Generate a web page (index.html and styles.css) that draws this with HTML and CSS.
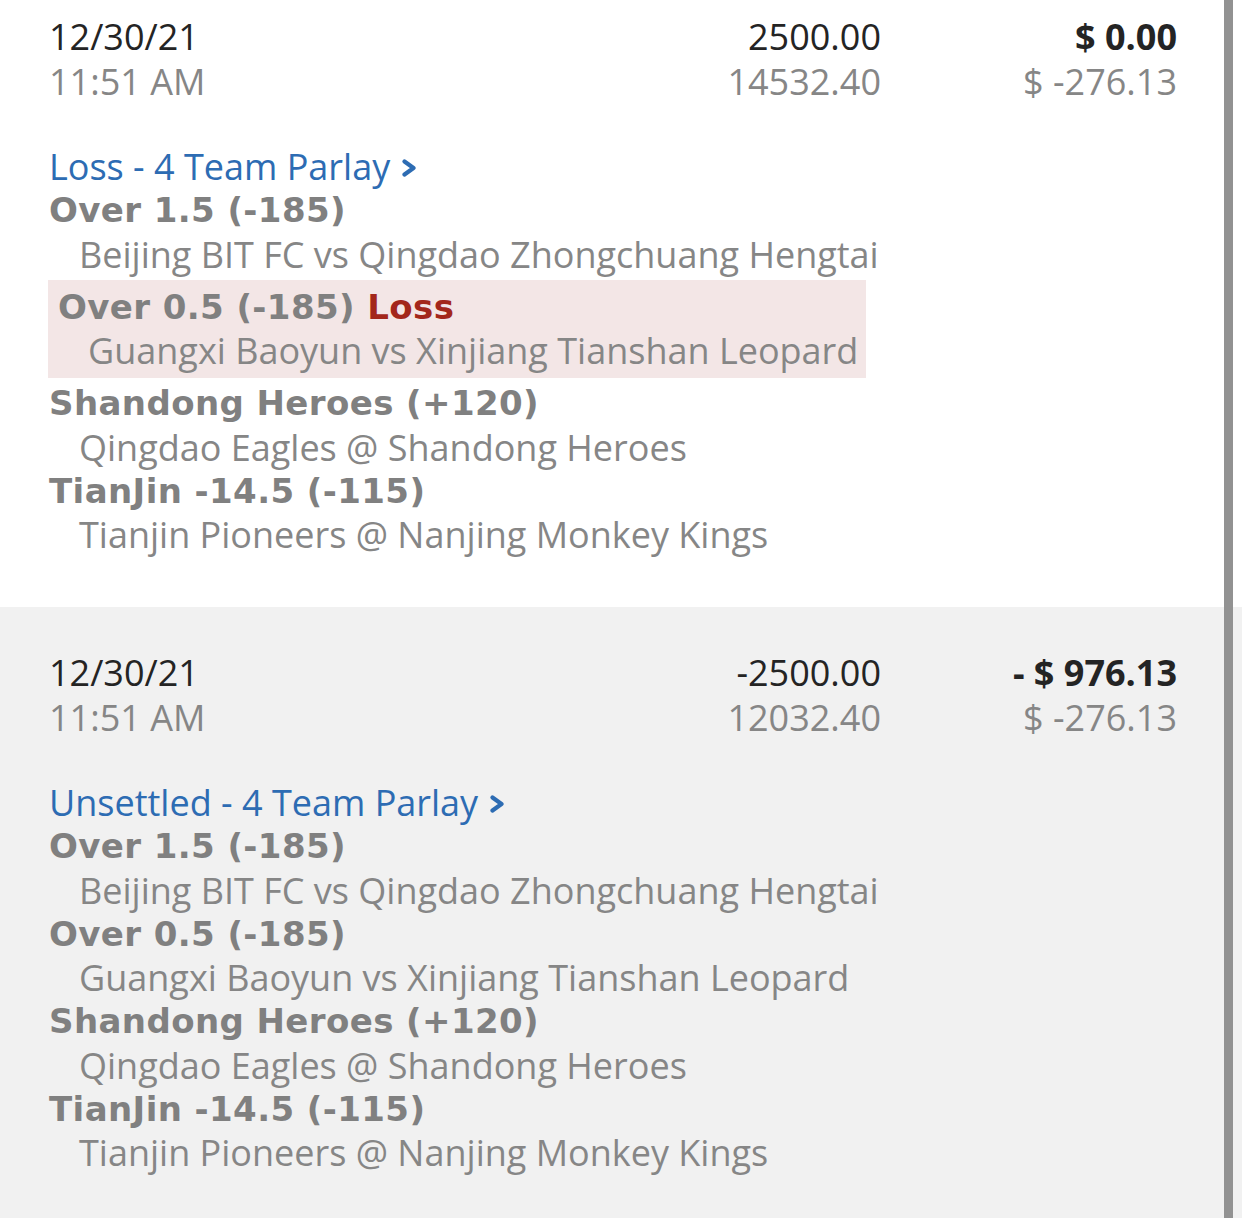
FILE: index.html
```html
<!DOCTYPE html>
<html lang="en">
<head>
<meta charset="utf-8">
<title>Wagers</title>
<link rel="stylesheet" href="styles.css">
</head>
<body>
<div class="page">
  <section class="wager wager-settled">
    <div class="head">
      <div class="col-date">
        <div class="dark">12/30/21</div>
        <div class="muted">11:51 AM</div>
      </div>
      <div class="col-risk">
        <div class="dark">2500.00</div>
        <div class="muted">14532.40</div>
      </div>
      <div class="col-win">
        <div class="dark strong">$ 0.00</div>
        <div class="muted">$ -276.13</div>
      </div>
    </div>
    <div class="legs">
      <a class="parlay-link">Loss - 4 Team Parlay<svg class="chev" width="16" height="18" viewBox="0 0 16 18"><polyline points="3.5,2.5 12.5,9 3.5,15.5" fill="none" stroke="currentColor" stroke-width="4.2" stroke-linecap="round" stroke-linejoin="round"/></svg></a>
      <div class="leg">
        <div class="pick">Over 1.5 (-185)</div>
        <div class="match">Beijing BIT FC vs Qingdao Zhongchuang Hengtai</div>
      </div>
      <div class="leg leg-lost">
        <div class="pick">Over 0.5 (-185) <span class="loss">Loss</span></div>
        <div class="match">Guangxi Baoyun vs Xinjiang Tianshan Leopard</div>
      </div>
      <div class="leg">
        <div class="pick">Shandong Heroes (+120)</div>
        <div class="match">Qingdao Eagles @ Shandong Heroes</div>
      </div>
      <div class="leg">
        <div class="pick">TianJin -14.5 (-115)</div>
        <div class="match">Tianjin Pioneers @ Nanjing Monkey Kings</div>
      </div>
    </div>
  </section>
  <section class="wager wager-open">
    <div class="head">
      <div class="col-date">
        <div class="dark">12/30/21</div>
        <div class="muted">11:51 AM</div>
      </div>
      <div class="col-risk">
        <div class="dark">-2500.00</div>
        <div class="muted">12032.40</div>
      </div>
      <div class="col-win">
        <div class="dark strong">- $ 976.13</div>
        <div class="muted">$ -276.13</div>
      </div>
    </div>
    <div class="legs">
      <a class="parlay-link">Unsettled - 4 Team Parlay<svg class="chev" width="16" height="18" viewBox="0 0 16 18"><polyline points="3.5,2.5 12.5,9 3.5,15.5" fill="none" stroke="currentColor" stroke-width="4.2" stroke-linecap="round" stroke-linejoin="round"/></svg></a>
      <div class="leg">
        <div class="pick">Over 1.5 (-185)</div>
        <div class="match">Beijing BIT FC vs Qingdao Zhongchuang Hengtai</div>
      </div>
      <div class="leg">
        <div class="pick">Over 0.5 (-185)</div>
        <div class="match">Guangxi Baoyun vs Xinjiang Tianshan Leopard</div>
      </div>
      <div class="leg">
        <div class="pick">Shandong Heroes (+120)</div>
        <div class="match">Qingdao Eagles @ Shandong Heroes</div>
      </div>
      <div class="leg">
        <div class="pick">TianJin -14.5 (-115)</div>
        <div class="match">Tianjin Pioneers @ Nanjing Monkey Kings</div>
      </div>
    </div>
  </section>
  <div class="scrollbar"></div>
</div>
</body>
</html>
```
FILE: styles.css
```css
* { box-sizing: border-box; }
html, body {
  margin: 0;
  padding: 0;
  background: #f1f1f1;
}
body {
  font-family: "Open Sans", "Noto Sans", sans-serif;
  font-size: 36px;
  color: #262626;
  -webkit-font-smoothing: antialiased;
}
.page {
  position: relative;
  width: 1242px;
  height: 1218px;
  overflow: hidden;
}
.wager {
  padding: 0 65px 0 49px;
}
.wager-settled {
  background: #ffffff;
  padding-top: 14px;
  height: 607px;
}
.wager-open {
  background: #f1f1f1;
  padding-top: 43px;
}
.head {
  display: flex;
  line-height: 45px;
}
.col-date { flex: 1; }
.col-risk { text-align: right; }
.col-win { width: 296px; text-align: right; }
.dark { color: #242424; }
.muted { color: #868686; }
.strong { font-weight: 700; }
.legs {
  margin-top: 40px;
  display: flex;
  flex-direction: column;
  align-items: flex-start;
}
.parlay-link {
  display: flex;
  align-items: center;
  gap: 11px;
  color: #2d6cb3;
  line-height: 45px;
}
.chev { margin-top: 3px; }
.leg {
  display: flex;
  flex-direction: column;
}
.pick {
  font-family: "DejaVu Sans", "Verdana", sans-serif;
  font-weight: 700;
  font-size: 34px;
  letter-spacing: 0.4px;
  line-height: 42.5px;
  color: #808080;
}
.match {
  padding-left: 30px;
  line-height: 45px;
  color: #868686;
}
.leg-lost {
  background: #f3e6e6;
  padding: 6px 8px 5px 10px;
  margin: 3px 0 4px -1px;
}
.loss { color: #a3271b; }
.scrollbar {
  position: absolute;
  top: 0;
  bottom: 0;
  right: 9px;
  width: 9px;
  background: #929292;
}
```
